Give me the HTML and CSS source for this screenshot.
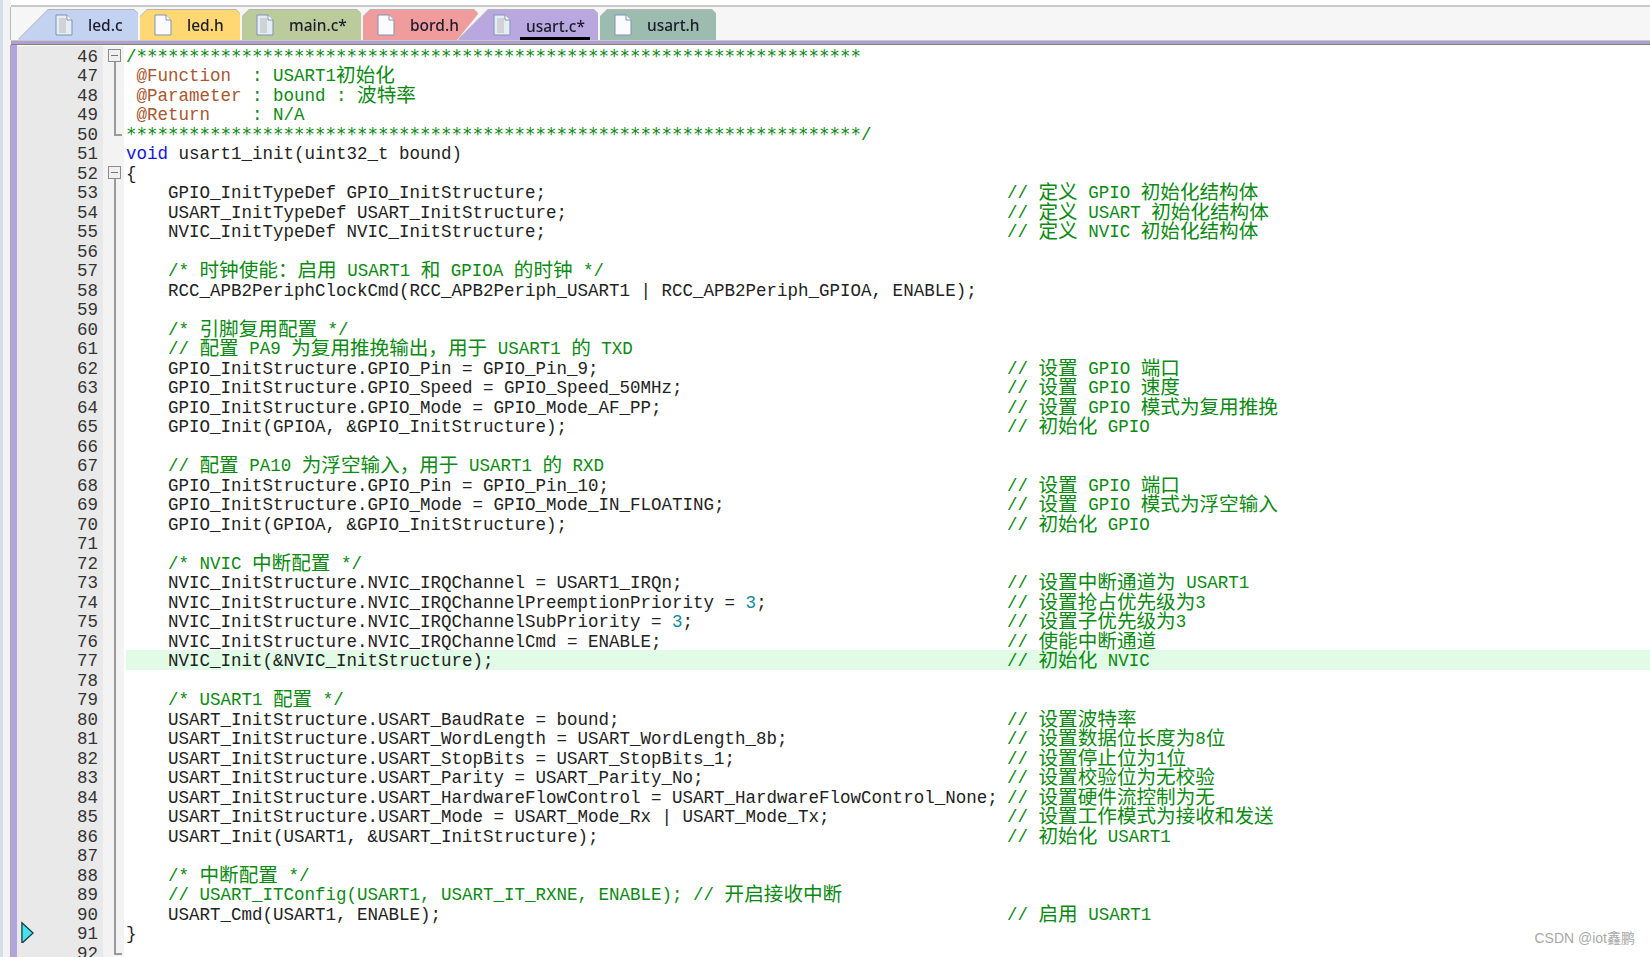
FILE: index.html
```html
<!DOCTYPE html>
<html lang="zh-CN">
<head>
    <meta charset="UTF-8">
    <title>usart.c</title>
    <link rel="stylesheet" href="styles.css">
</head>
<body>
    <div class="topline"></div>
    <div class="tabs">
        <div class="tab tab-led-c"><div class="face">
            <svg class="file" viewBox="0 0 18 22"><path d="M1 1h11l5 5v15H1z" fill="#e4ecf6" stroke="#7f93b5"/><path d="M12 1v5h5" fill="#fff" stroke="#7f93b5"/><path d="M4 4h7v15H4z" fill="#c8c8c8" opacity=".7"/></svg>
            <span class="label">led.c</span>
        </div></div>
        <div class="tab tab-led-h"><div class="face">
            <svg class="file" viewBox="0 0 18 22"><path d="M1 1h11l5 5v15H1z" fill="#fafcff" stroke="#7f93b5"/><path d="M12 1v5h5" fill="#fff" stroke="#7f93b5"/></svg>
            <span class="label">led.h</span>
        </div></div>
        <div class="tab tab-main"><div class="face">
            <svg class="file" viewBox="0 0 18 22"><path d="M1 1h11l5 5v15H1z" fill="#e4ecf6" stroke="#7f93b5"/><path d="M12 1v5h5" fill="#fff" stroke="#7f93b5"/><path d="M4 4h7v15H4z" fill="#c8c8c8" opacity=".7"/></svg>
            <span class="label">main.c*</span>
        </div></div>
        <div class="tab tab-bord"><div class="face">
            <svg class="file" viewBox="0 0 18 22"><path d="M1 1h11l5 5v15H1z" fill="#fafcff" stroke="#7f93b5"/><path d="M12 1v5h5" fill="#fff" stroke="#7f93b5"/></svg>
            <span class="label">bord.h</span>
        </div></div>
        <div class="tab tab-usart-c"><div class="face">
            <svg class="file" viewBox="0 0 18 22"><path d="M1 1h11l5 5v15H1z" fill="#e4ecf6" stroke="#7f93b5"/><path d="M12 1v5h5" fill="#fff" stroke="#7f93b5"/><path d="M4 4h7v15H4z" fill="#c8c8c8" opacity=".7"/></svg>
            <span class="label active">usart.c*</span>
        </div></div>
        <div class="tab tab-usart-h"><div class="face">
            <svg class="file" viewBox="0 0 18 22"><path d="M1 1h11l5 5v15H1z" fill="#fafcff" stroke="#7f93b5"/><path d="M12 1v5h5" fill="#fff" stroke="#7f93b5"/></svg>
            <span class="label">usart.h</span>
        </div></div>
    </div>
    <div class="strip"></div>
    <div class="editor">
        <div class="line"><span class="num">46</span><span class="fold open"><b></b></span><div class="text"><span class="code cm">/<span class="stars">*********************************************************************</span></span></div></div>
        <div class="line"><span class="num">47</span><span class="fold mid"></span><div class="text"><span class="code cm"> <em>@Function</em>  : USART1<i>初始化</i></span></div></div>
        <div class="line"><span class="num">48</span><span class="fold mid"></span><div class="text"><span class="code cm"> <em>@Parameter</em> : bound : <i>波特率</i></span></div></div>
        <div class="line"><span class="num">49</span><span class="fold mid"></span><div class="text"><span class="code cm"> <em>@Return</em>    : N/A</span></div></div>
        <div class="line"><span class="num">50</span><span class="fold end"></span><div class="text"><span class="code cm"><span class="stars">**********************************************************************</span>/</span></div></div>
        <div class="line"><span class="num">51</span><span class="fold"></span><div class="text"><span class="code"><u>void</u> usart1_init(uint32_t bound)</span></div></div>
        <div class="line"><span class="num">52</span><span class="fold open"><b></b></span><div class="text"><span class="code">{</span></div></div>
        <div class="line"><span class="num">53</span><span class="fold mid"></span><div class="text"><span class="code">    GPIO_InitTypeDef GPIO_InitStructure;</span><span class="cm">// <i>定义</i> GPIO <i>初始化结构体</i></span></div></div>
        <div class="line"><span class="num">54</span><span class="fold mid"></span><div class="text"><span class="code">    USART_InitTypeDef USART_InitStructure;</span><span class="cm">// <i>定义</i> USART <i>初始化结构体</i></span></div></div>
        <div class="line"><span class="num">55</span><span class="fold mid"></span><div class="text"><span class="code">    NVIC_InitTypeDef NVIC_InitStructure;</span><span class="cm">// <i>定义</i> NVIC <i>初始化结构体</i></span></div></div>
        <div class="line"><span class="num">56</span><span class="fold mid"></span><div class="text"></div></div>
        <div class="line"><span class="num">57</span><span class="fold mid"></span><div class="text"><span class="code cm">    /* <i>时钟使能：启用</i> USART1 <i>和</i> GPIOA <i>的时钟</i> */</span></div></div>
        <div class="line"><span class="num">58</span><span class="fold mid"></span><div class="text"><span class="code">    RCC_APB2PeriphClockCmd(RCC_APB2Periph_USART1 | RCC_APB2Periph_GPIOA, ENABLE);</span></div></div>
        <div class="line"><span class="num">59</span><span class="fold mid"></span><div class="text"></div></div>
        <div class="line"><span class="num">60</span><span class="fold mid"></span><div class="text"><span class="code cm">    /* <i>引脚复用配置</i> */</span></div></div>
        <div class="line"><span class="num">61</span><span class="fold mid"></span><div class="text"><span class="code cm">    // <i>配置</i> PA9 <i>为复用推挽输出，用于</i> USART1 <i>的</i> TXD</span></div></div>
        <div class="line"><span class="num">62</span><span class="fold mid"></span><div class="text"><span class="code">    GPIO_InitStructure.GPIO_Pin = GPIO_Pin_9;</span><span class="cm">// <i>设置</i> GPIO <i>端口</i></span></div></div>
        <div class="line"><span class="num">63</span><span class="fold mid"></span><div class="text"><span class="code">    GPIO_InitStructure.GPIO_Speed = GPIO_Speed_50MHz;</span><span class="cm">// <i>设置</i> GPIO <i>速度</i></span></div></div>
        <div class="line"><span class="num">64</span><span class="fold mid"></span><div class="text"><span class="code">    GPIO_InitStructure.GPIO_Mode = GPIO_Mode_AF_PP;</span><span class="cm">// <i>设置</i> GPIO <i>模式为复用推挽</i></span></div></div>
        <div class="line"><span class="num">65</span><span class="fold mid"></span><div class="text"><span class="code">    GPIO_Init(GPIOA, &amp;GPIO_InitStructure);</span><span class="cm">// <i>初始化</i> GPIO</span></div></div>
        <div class="line"><span class="num">66</span><span class="fold mid"></span><div class="text"></div></div>
        <div class="line"><span class="num">67</span><span class="fold mid"></span><div class="text"><span class="code cm">    // <i>配置</i> PA10 <i>为浮空输入，用于</i> USART1 <i>的</i> RXD</span></div></div>
        <div class="line"><span class="num">68</span><span class="fold mid"></span><div class="text"><span class="code">    GPIO_InitStructure.GPIO_Pin = GPIO_Pin_10;</span><span class="cm">// <i>设置</i> GPIO <i>端口</i></span></div></div>
        <div class="line"><span class="num">69</span><span class="fold mid"></span><div class="text"><span class="code">    GPIO_InitStructure.GPIO_Mode = GPIO_Mode_IN_FLOATING;</span><span class="cm">// <i>设置</i> GPIO <i>模式为浮空输入</i></span></div></div>
        <div class="line"><span class="num">70</span><span class="fold mid"></span><div class="text"><span class="code">    GPIO_Init(GPIOA, &amp;GPIO_InitStructure);</span><span class="cm">// <i>初始化</i> GPIO</span></div></div>
        <div class="line"><span class="num">71</span><span class="fold mid"></span><div class="text"></div></div>
        <div class="line"><span class="num">72</span><span class="fold mid"></span><div class="text"><span class="code cm">    /* NVIC <i>中断配置</i> */</span></div></div>
        <div class="line"><span class="num">73</span><span class="fold mid"></span><div class="text"><span class="code">    NVIC_InitStructure.NVIC_IRQChannel = USART1_IRQn;</span><span class="cm">// <i>设置中断通道为</i> USART1</span></div></div>
        <div class="line"><span class="num">74</span><span class="fold mid"></span><div class="text"><span class="code">    NVIC_InitStructure.NVIC_IRQChannelPreemptionPriority = <s>3</s>;</span><span class="cm">// <i>设置抢占优先级为</i>3</span></div></div>
        <div class="line"><span class="num">75</span><span class="fold mid"></span><div class="text"><span class="code">    NVIC_InitStructure.NVIC_IRQChannelSubPriority = <s>3</s>;</span><span class="cm">// <i>设置子优先级为</i>3</span></div></div>
        <div class="line"><span class="num">76</span><span class="fold mid"></span><div class="text"><span class="code">    NVIC_InitStructure.NVIC_IRQChannelCmd = ENABLE;</span><span class="cm">// <i>使能中断通道</i></span></div></div>
        <div class="line current"><span class="num">77</span><span class="fold mid"></span><div class="text"><span class="code">    NVIC_Init(&amp;NVIC_InitStructure);</span><span class="cm">// <i>初始化</i> NVIC</span></div></div>
        <div class="line"><span class="num">78</span><span class="fold mid"></span><div class="text"></div></div>
        <div class="line"><span class="num">79</span><span class="fold mid"></span><div class="text"><span class="code cm">    /* USART1 <i>配置</i> */</span></div></div>
        <div class="line"><span class="num">80</span><span class="fold mid"></span><div class="text"><span class="code">    USART_InitStructure.USART_BaudRate = bound;</span><span class="cm">// <i>设置波特率</i></span></div></div>
        <div class="line"><span class="num">81</span><span class="fold mid"></span><div class="text"><span class="code">    USART_InitStructure.USART_WordLength = USART_WordLength_8b;</span><span class="cm">// <i>设置数据位长度为</i>8<i>位</i></span></div></div>
        <div class="line"><span class="num">82</span><span class="fold mid"></span><div class="text"><span class="code">    USART_InitStructure.USART_StopBits = USART_StopBits_1;</span><span class="cm">// <i>设置停止位为</i>1<i>位</i></span></div></div>
        <div class="line"><span class="num">83</span><span class="fold mid"></span><div class="text"><span class="code">    USART_InitStructure.USART_Parity = USART_Parity_No;</span><span class="cm">// <i>设置校验位为无校验</i></span></div></div>
        <div class="line"><span class="num">84</span><span class="fold mid"></span><div class="text"><span class="code">    USART_InitStructure.USART_HardwareFlowControl = USART_HardwareFlowControl_None;</span><span class="cm">// <i>设置硬件流控制为无</i></span></div></div>
        <div class="line"><span class="num">85</span><span class="fold mid"></span><div class="text"><span class="code">    USART_InitStructure.USART_Mode = USART_Mode_Rx | USART_Mode_Tx;</span><span class="cm">// <i>设置工作模式为接收和发送</i></span></div></div>
        <div class="line"><span class="num">86</span><span class="fold mid"></span><div class="text"><span class="code">    USART_Init(USART1, &amp;USART_InitStructure);</span><span class="cm">// <i>初始化</i> USART1</span></div></div>
        <div class="line"><span class="num">87</span><span class="fold mid"></span><div class="text"></div></div>
        <div class="line"><span class="num">88</span><span class="fold mid"></span><div class="text"><span class="code cm">    /* <i>中断配置</i> */</span></div></div>
        <div class="line"><span class="num">89</span><span class="fold mid"></span><div class="text"><span class="code cm">    // USART_ITConfig(USART1, USART_IT_RXNE, ENABLE); // <i>开启接收中断</i></span></div></div>
        <div class="line"><span class="num">90</span><span class="fold mid"></span><div class="text"><span class="code">    USART_Cmd(USART1, ENABLE);</span><span class="cm">// <i>启用</i> USART1</span></div></div>
        <div class="line"><span class="num"><svg class="arrow" viewBox="0 0 14 24"><path d="M1 1l12 11L1 23z" fill="#45e3f0" stroke="#1c3a3e" stroke-width="1.4"/></svg>91</span><span class="fold mid"></span><div class="text"><span class="code">}</span></div></div>
        <div class="line"><span class="num">92</span><span class="fold end"></span><div class="text"></div></div>
    </div>
    <div class="watermark">CSDN @iot鑫鹏</div>
</body>
</html>
```

FILE: styles.css
```css
body {
    margin: 0;
    width: 1650px;
    height: 957px;
    overflow: hidden;
    background: linear-gradient(90deg, #d3deea 3px, #f3f3f3 3px);
    font-family: "Liberation Mono", "Noto Sans CJK SC", monospace;
    position: relative;
}
.topline {
    height: 2px;
    margin-left: 11px;
    border-top: 5px solid white;
    background-color: #c9c9c9;
}
.tabs {
    display: flex;
    height: 30px;
    padding-top: 3px;
    padding-left: 7px;
    margin-left: 10px;
    background-color: #f6f6f6;
    border-left: 1px solid #bbb;
}
.tab {
    height: 30px;
    filter: drop-shadow(0 -1px 0 #b5b5b5);
}
.face {
    height: 100%;
    display: flex;
    align-items: center;
    gap: 15px;
    padding-left: 14px;
    box-sizing: border-box;
    font-family: "Noto Sans", sans-serif;
    font-size: 15.5px;
    font-weight: 500;
    color: #1c1c2c;
    white-space: nowrap;
}
.file {
    width: 18px;
    height: 22px;
    flex-shrink: 0;
}
.label.active {
    align-self: flex-end;
    height: 27px;
    line-height: 27px;
    width: 70px;
    margin-left: -6px;
    padding-left: 6px;
    box-sizing: border-box;
    border-bottom: 3px solid black;
}
.tab-led-c .face {
    width: 120px;
    padding-left: 37px;
    background-color: #c2d2f0;
    clip-path: polygon(0 100%, 30px 0, 116px 0, 120px 4px, 120px 100%);
}
.tab-led-h {
    margin-left: 2px;
}
.tab-led-h .face {
    width: 100px;
    background-color: #ffd873;
    clip-path: polygon(7px 0, 96px 0, 100px 4px, 100px 100%, 0 100%, 0 7px);
}
.tab-main {
    margin-left: 2px;
}
.tab-main .face {
    width: 119px;
    background-color: #bccb9c;
    clip-path: polygon(7px 0, 115px 0, 119px 4px, 119px 100%, 0 100%, 0 7px);
}
.tab-bord {
    margin-left: 2px;
}
.tab-bord .face {
    width: 115px;
    background-color: #f09c9c;
    clip-path: polygon(7px 0, 111px 0, 115px 4px, 94px 100%, 0 100%, 0 7px);
}
.tab-usart-c {
    margin-left: -20px;
}
.tab-usart-c .face {
    width: 140px;
    padding-left: 35px;
    background-color: #b9a7e0;
    clip-path: polygon(0 100%, 30px 0, 136px 0, 140px 4px, 140px 100%);
}
.tab-usart-h {
    margin-left: 2px;
}
.tab-usart-h .face {
    width: 116px;
    background-color: #9cbcb0;
    clip-path: polygon(7px 0, 112px 0, 116px 4px, 116px 100%, 0 100%, 0 7px);
}
.strip {
    height: 5px;
    margin-left: 11px;
    background: linear-gradient(#c8c8c8 1px, #b0a0d0 1px, #b0a0d0 4px, #808080 4px);
}
.editor {
    margin-left: 10px;
    border-left: 1px solid #a8a8a8;
    height: 912px;
    overflow: hidden;
    background-color: white;
    box-shadow: inset 6px 0 0 #b3a4dc;
    padding-left: 6px;
    padding-top: 0.5px;
}
.line {
    display: flex;
    height: 19.5px;
    line-height: 19.5px;
    font-size: 17.5px;
    color: #222;
    white-space: pre;
}
.num {
    box-sizing: border-box;
    width: 86px;
    padding-top: 2px;
    padding-right: 5px;
    text-align: right;
    background-color: #e9e9e9;
    color: #333;
    position: relative;
    flex-shrink: 0;
}
.arrow {
    position: absolute;
    left: 4px;
    top: -2px;
    width: 13px;
    height: 24px;
}
.fold {
    box-sizing: border-box;
    width: 21px;
    padding-left: 2px;
    margin-right: 2px;
    flex-shrink: 0;
    display: flex;
    justify-content: center;
    align-items: center;
    background-color: #f3f3f3;
}
.fold.mid {
    background-image: linear-gradient(#9a9a9a, #9a9a9a);
    background-size: 2px 100%;
    background-position: 11px 0;
    background-repeat: no-repeat;
}
.fold.end {
    background-image: linear-gradient(#9a9a9a, #9a9a9a), linear-gradient(#9a9a9a, #9a9a9a);
    background-size: 2px 60%, 8px 2px;
    background-position: 11px 0, 11px 60%;
    background-repeat: no-repeat;
}
.fold.open {
    background-image: linear-gradient(#9a9a9a, #9a9a9a);
    background-size: 2px 50%;
    background-position: 11px 100%;
    background-repeat: no-repeat;
}
.fold b {
    width: 11px;
    height: 11px;
    border: 1px solid #8c8c8c;
    background: linear-gradient(#777, #777) center / 7px 1px no-repeat, #f0f0f0;
}
.text {
    box-sizing: border-box;
    flex: 1;
    display: flex;
    padding-top: 2px;
}
.current .text {
    background-color: #e1fbe6;
}
.code {
    width: 881px;
    flex-shrink: 0;
}
.cm {
    color: #0b8a12;
}
.stars {
    font-family: "DejaVu Sans Mono", monospace;
    font-size: 17.44px;
    line-height: 0;
}
.line i {
    font-family: "Noto Sans CJK SC", sans-serif;
    font-size: 19.6px;
    font-style: normal;
    line-height: 0;
    vertical-align: -1px;
}
.line em {
    color: #a9572f;
    font-style: normal;
}
.line u {
    color: #1414e0;
    text-decoration: none;
}
.line s {
    color: #0a8a9a;
    text-decoration: none;
}
.watermark {
    position: absolute;
    right: 15px;
    bottom: 10px;
    font-family: "Liberation Sans", "Noto Sans CJK SC", sans-serif;
    font-size: 14px;
    color: #a8a8a8;
}
```
